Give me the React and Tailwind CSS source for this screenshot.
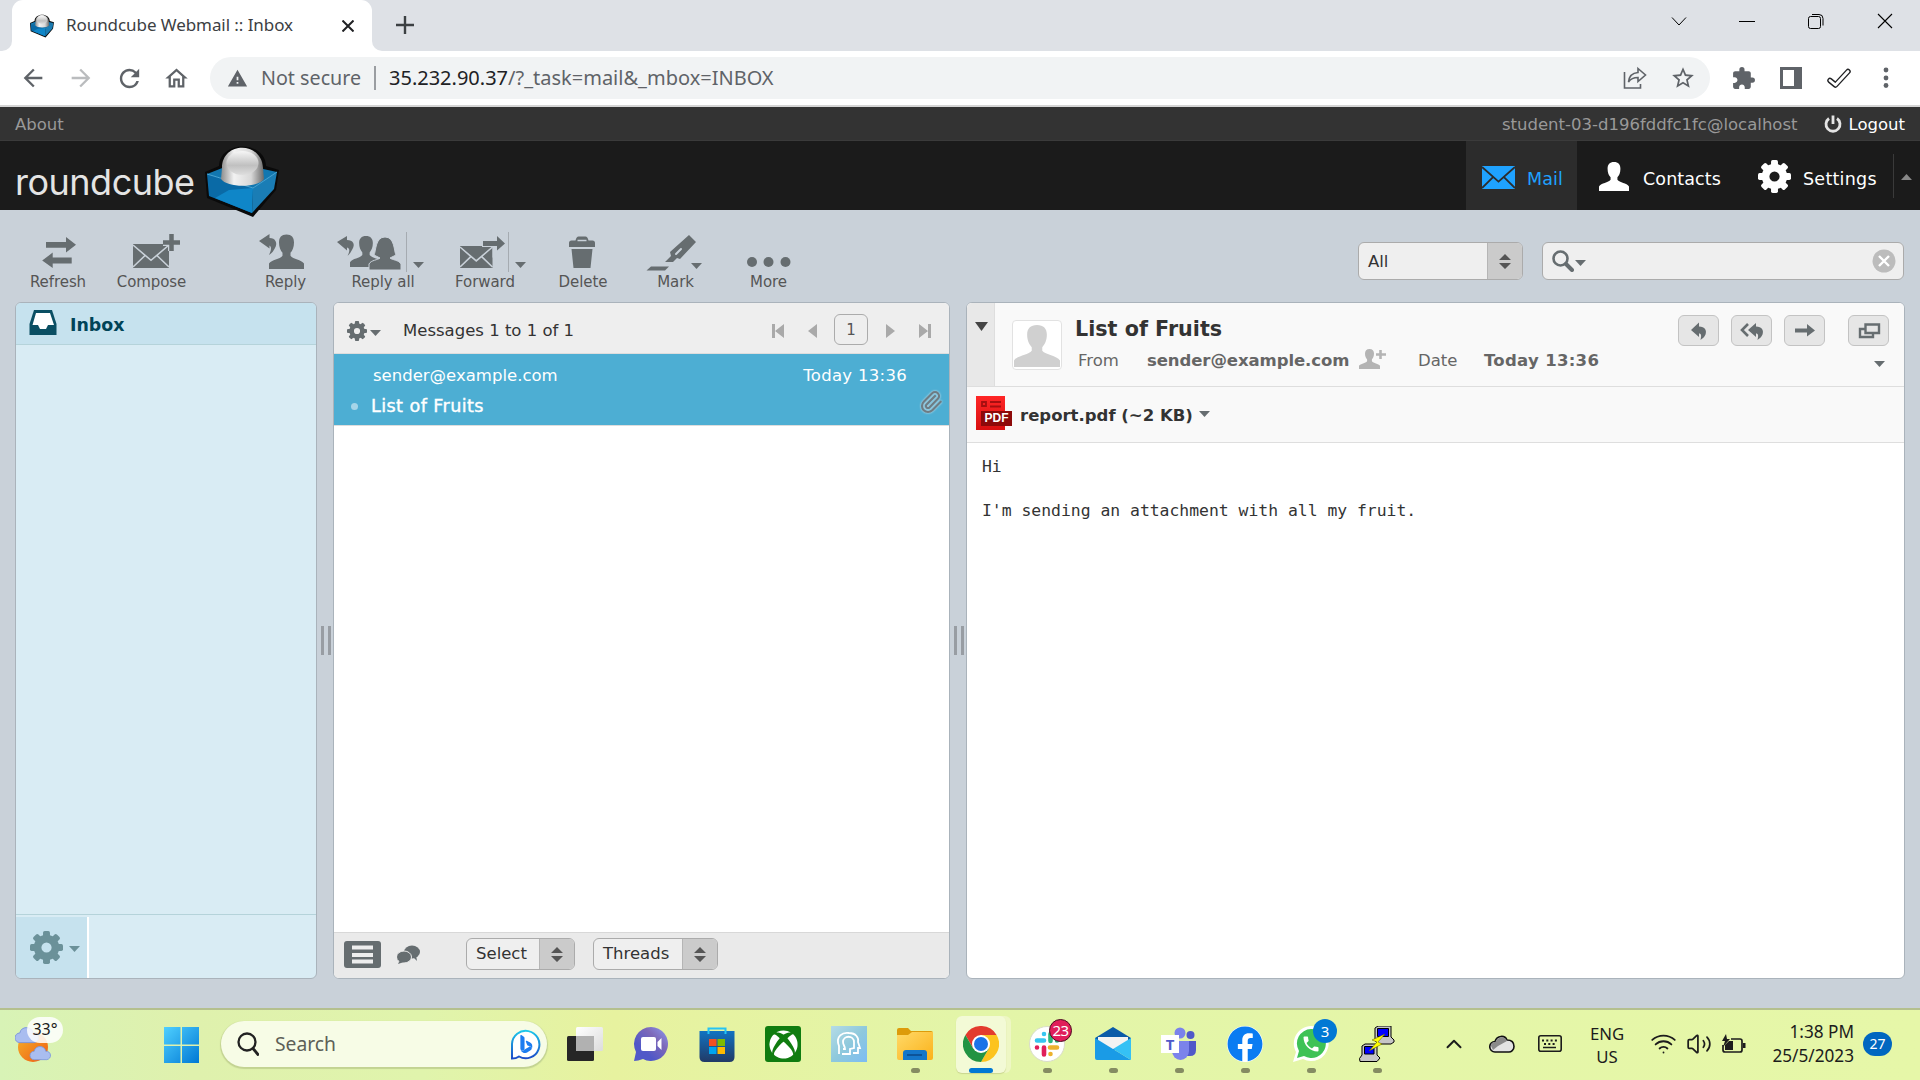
import React from "react";
import { MdArrowBack, MdArrowForward, MdRefresh, MdOutlineHome, MdWarning, MdStarBorder, MdExtension, MdPhone } from "react-icons/md";
import { FaXbox, FaFacebook } from "react-icons/fa";
import { BsBing } from "react-icons/bs";
import { Wifi, Volume2, ChevronUp, Paperclip } from "lucide-react";

const G = "#666d70";

function Svg({ box, className = "", children }) {
  const [, , w, h] = box.split(" ");
  return (
    <svg viewBox={box} width={w} height={h} className={"block shrink-0 " + className}>
      {children}
    </svg>
  );
}

function T({ className = "", children }) {
  return <span className={"whitespace-nowrap " + className}>{children}</span>;
}

function Gear({ cx, cy, r, fill }) {
  const t = r * 0.42;
  return (
    <g>
      {[0, 45, 90, 135, 180, 225, 270, 315].map((a) => (
        <rect key={a} x={cx - t / 2} y={cy - r} width={t} height={r * 0.5} rx={r * 0.1} fill={fill} transform={`rotate(${a} ${cx} ${cy})`} />
      ))}
      <circle cx={cx} cy={cy} r={r * 0.54} fill="none" stroke={fill} strokeWidth={r * 0.46} />
    </g>
  );
}

function Envelope({ x, y, w, h, fill = G, line = "#c9d1d9", sw = 1.6 }) {
  return (
    <g>
      <rect x={x} y={y} width={w} height={h} fill={fill} />
      <path
        d={`M${x} ${y + 1}L${x + w / 2} ${y + h * 0.68}L${x + w} ${y + 1}M${x} ${y + h - 1}L${x + w * 0.35} ${y + h * 0.46}M${x + w} ${y + h - 1}L${x + w * 0.65} ${y + h * 0.46}`}
        fill="none" stroke={line} strokeWidth={sw}
      />
    </g>
  );
}

/* Person bust whose box is w wide and h tall */
function Person({ x, y, w, h, fill = G }) {
  return (
    <g transform={`translate(${x} ${y}) scale(${w / 35} ${h / 35})`} fill={fill}>
      <path d="M17.500 0c5 0 7.500 3 7.500 8 0 5-1.500 8-3.500 10.500v3c2.500 3.500 11 4 13.500 8V35H0v-5.500c2.500-4 11-4.500 13.500-8v-3C11.500 16 10 13 10 8c0-5 2.500-8 7.500-8z" />
    </g>
  );
}

function Caret({ fill = G, className = "", w = 11, h = 6 }) {
  return (
    <svg width={w} height={h} viewBox="0 0 10 6" preserveAspectRatio="none" className={"block shrink-0 " + className}>
      <path d="M0 0h10L5 6z" fill={fill} />
    </svg>
  );
}

function Cube({ className }) {
  return (
    <svg viewBox="0 0 74 71" className={className}>
      <defs>
        <linearGradient id="dome" x1="0" x2="1" y1="0" y2="0">
          <stop offset="0" stopColor="#8d8d8d" /><stop offset=".3" stopColor="#f2f2f2" /><stop offset=".7" stopColor="#d8d8d8" /><stop offset="1" stopColor="#6b6b6b" />
        </linearGradient>
        <linearGradient id="domeTop" x1="0" x2="0" y1="0" y2="1">
          <stop offset="0" stopColor="#f6f6f6" /><stop offset=".6" stopColor="#c0c0c0" /><stop offset="1" stopColor="#dedede" />
        </linearGradient>
      </defs>
      <path d="M0 26L14 20C15-6 60-6 61 20L74 24 71 44 48 71 2 52z" fill="#0a0a0a" />
      <path d="M2 28L30 17 72 26 48 42z" fill="#1277b0" />
      <path d="M2 28L48 42 47 67 4 50z" fill="#0a6aa6" />
      <path d="M24 44L48 42 47 67 10 52z" fill="#0f86c8" />
      <path d="M48 42L72 26 69 43 47 67z" fill="#1a7db5" />
      <path d="M2 28L48 42 72 26" fill="none" stroke="#4aa8d8" strokeWidth="1" />
      <path d="M17 22C17-5 57-5 58 22l1 11c-6 9-37 9-43 0z" fill="url(#dome)" />
      <ellipse cx="37.500" cy="17" rx="16" ry="12" fill="url(#domeTop)" />
    </svg>
  );
}

function ChromeTabs() {
  return (
    <div className="h-[51px] bg-[#dee1e6] flex shrink-0">
      <div className="w-3 h-full bg-white shrink-0"><div className="w-3 h-full bg-[#dee1e6] rounded-br-[10px]" /></div>
      <div className="w-[360px] h-full bg-white rounded-t-[11px] flex items-center pl-[18px] shrink-0 text-[#3c4043]">
        <Cube className="w-6 h-[24px] shrink-0" />
        <div className="w-[288px] shrink-0 pl-3 pb-px text-[17px] tracking-[-0.070px] font-['Noto_Sans',sans-serif]"><T>Roundcube Webmail :: Inbox</T></div>
        <Svg box="0 0 12 12"><path d="M.500.500l11 11M11.500.500l-11 11" stroke="#202124" strokeWidth="2" /></Svg>
      </div>
      <div className="w-3 h-full bg-white shrink-0"><div className="w-3 h-full bg-[#dee1e6] rounded-bl-[10px]" /></div>
      <div className="pl-3 pt-[16px]"><Svg box="0 0 18 18"><path d="M9 0v18M0 9h18" stroke="#3c4043" strokeWidth="2.400" /></Svg></div>
      <div className="ml-auto pr-[27px] pt-[13px] flex">
        <Svg box="0 0 16 16" className="mr-[52px]"><path d="M1 4.500l7 7.500 7-7.500" fill="none" stroke="#000" /></Svg>
        <Svg box="0 0 16 16" className="mr-[53px]"><path d="M0 8.500h16" stroke="#000" /></Svg>
        <Svg box="0 0 16 16" className="mr-[53px]"><rect x=".5" y="3.500" width="12" height="12" rx="2" fill="none" stroke="#000" /><path d="M4 1.500h7a4 4 0 0 1 4 4v7" fill="none" stroke="#000" /></Svg>
        <Svg box="0 0 16 16"><path d="M1 1l14 14M15 1L1 15" stroke="#000" strokeWidth="1.100" /></Svg>
      </div>
    </div>
  );
}

function AddressBar() {
  return (
    <div className="h-[56px] border-b-2 border-[#d5d5d5] bg-white flex items-center shrink-0 pl-[19px] text-[#5f6368]">
      <MdArrowBack size={28} className="shrink-0" />
      <MdArrowForward size={28} className="ml-5 shrink-0 text-[#babcbe]" />
      <MdRefresh size={29} className="ml-5 shrink-0" />
      <MdOutlineHome size={27} className="ml-[19px] shrink-0" />
      <div className="ml-5 w-[1500px] h-[42px] rounded-full bg-[#f1f3f4] flex items-center shrink-0 pl-[17px] text-[20px] font-['Noto_Sans',sans-serif]">
        <MdWarning size={21} className="shrink-0" />
        <div className="w-[126px] shrink-0 pl-[13px] text-[19.700px]"><T>Not secure</T></div>
        <div className="w-0.5 h-6 bg-[#9a9da1] shrink-0" />
        <div className="w-[1241px] shrink-0 pl-[13px]"><T><span className="text-[#202124]">35.232.90.37</span>/?_task=mail&amp;_mbox=INBOX</T></div>
        <Svg box="0 0 24 24" className="ml-[6px]"><path d="M1.500 6v16h16v-4" fill="none" stroke="#5f6368" strokeWidth="1.600" /><path d="M15 2.500l7.500 6.500-7.500 6.500v-4c-5 0-7.500 1.500-9.500 4.500.5-5.500 3.500-9 9.500-9.500z" fill="none" stroke="#5f6368" strokeWidth="1.600" /></Svg>
        <MdStarBorder size={26} className="ml-[23px] shrink-0" />
      </div>
      <MdExtension size={25} className="ml-[21px] shrink-0" />
      <Svg box="0 0 22 22" className="ml-[24px]"><path d="M0 0h22v22H0zM3 3v16h11V3z" fill="#5f6368" fillRule="evenodd" /></Svg>
      <Svg box="0 0 24 20" className="ml-[25px]"><path d="M3 12.500L8.500 17 21 3.500" fill="none" stroke="#202124" strokeWidth="5.500" strokeLinecap="round" strokeLinejoin="round" /><path d="M3 12.500L8.500 17 21 3.500" fill="none" stroke="#fff" strokeWidth="2.800" strokeLinecap="round" strokeLinejoin="round" /></Svg>
      <Svg box="0 0 6 22" className="ml-[32px]"><g fill="#5f6368"><circle cx="3" cy="3" r="2.400" /><circle cx="3" cy="11" r="2.400" /><circle cx="3" cy="18.500" r="2.400" /></g></Svg>
    </div>
  );
}

function Header() {
  return (
    <>
      <div className="h-[34px] bg-[#333] border-b border-[#3b3b3b] flex items-center shrink-0 pl-[15px] pr-[15px] pt-[3px] text-[16.500px] text-[#999]">
        <T>About</T>
        <div className="ml-auto flex items-center">
          <T>student-03-d196fddfc1fc@localhost</T>
          <Svg box="0 0 18 18" className="ml-[26px] mr-[7px] mb-[3px]"><path d="M5 3.500a7 7 0 1 0 8 0M9 .5V9" fill="none" stroke="#e4e4e4" strokeWidth="2.800" /></Svg>
          <T className="text-white">Logout</T>
        </div>
      </div>
      <div className="h-[69px] bg-[#1b1b1b] flex shrink-0 pl-[15px] text-[17.500px] tracking-[0.100px]">
        <div className="w-[190px] pt-[17px] text-[36px] leading-[48px] tracking-[-0.500px] font-normal text-[#e4e4e4] font-['Inter',sans-serif]"><T>roundcube</T></div>
        <Cube className="w-[74px] h-[71px] mt-[5px] shrink-0 relative" />
        <div className="ml-auto flex text-white">
          <div className="w-[111px] bg-[#2c2c2c] flex items-center pl-4 text-[#1fa2ff]">
            <Svg box="0 0 33 23" className="mt-1"><Envelope x={0} y={0} w={33} h={23} fill="#1fa2ff" line="#2c2c2c" sw={1.8} /></Svg>
            <div className="pl-[12px] pt-2"><T>Mail</T></div>
          </div>
          <div className="w-[165px] flex items-center pl-[22px]">
            <Svg box="0 0 30 29" className="mt-0.5"><Person x={0} y={0} w={30} h={29} fill="#fff" /></Svg>
            <div className="pl-[14px] pt-2"><T>Contacts</T></div>
          </div>
          <div className="w-[151px] flex items-center pl-4">
            <Svg box="0 0 33 33" className="mt-0.5"><Gear cx={16.5} cy={16.5} r={16.5} fill="#fff" /></Svg>
            <div className="pl-[12px] pt-2 tracking-[0.250px]"><T>Settings</T></div>
          </div>
          <div className="w-[27px] flex items-center">
            <div className="w-px h-11 bg-[#3a3a3a]" />
            <svg width="11" height="6" viewBox="0 0 11 6" className="ml-[7px] mt-[3px]"><path d="M5.500 0L11 6H0z" fill="#888" /></svg>
          </div>
        </div>
      </div>
    </>
  );
}

function Tool({ w, x, label, className = "", children }) {
  return (
    <div className={"flex flex-col items-center shrink-0 pt-5 " + className}>
      <Svg box={`${x} 230 ${w} 42`}>{children}</Svg>
      <T className="leading-5 text-[15px] tracking-[-0.080px] text-[#555]">{label}</T>
    </div>
  );
}

function Stepper() {
  return (
    <div className="bg-[#cbcbcb] border-l border-[#b5b5b5] flex items-center justify-center h-full w-[35px] pr-px shrink-0">
      <Svg box="0 0 12 15"><path d="M0 6L6 0l6 6zM0 9h12l-6 6z" fill="#555" /></Svg>
    </div>
  );
}

function Toolbar() {
  return (
    <div className="h-[92px] flex shrink-0 pl-4">
      <Tool w={84} x={16} label="Refresh">
        <path fill={G} d="M46 242h20v-5l10 7.700-10 7.700v-4.600h-20zM71.700 257.600h-19v-5l-10.500 8 10.500 7.500v-4.600h19z" />
      </Tool>
      <Tool w={103} x={100} label="Compose">
        <Envelope x={133} y={244} w={36} h={24} />
        <path d="M171.500 234v17M163 242.500h17" stroke="#c9d1d9" strokeWidth="7" />
        <path d="M171.500 234v17M163 242.500h17" stroke={G} strokeWidth="4.500" />
      </Tool>
      <Tool w={81} x={245} label="Reply" className="ml-[42px]">
        <path fill={G} d="M259 241l10.500-7v4c6 0 8.500 5 5.500 10-1.500 3-3 5-6 7 2-4 3-8 .5-9.500v3z" />
        <Person x={269} y={234.500} w={35} h={34.500} />
      </Tool>
      <Tool w={114} x={326} label="Reply all">
        <path fill={G} d="M337 242l10-6v4c6 0 8.500 4 5.500 9-1.500 3-3 5-5 7 2-4 3-7.500-.5-8.500v3z" />
        <Person x={350} y={236} w={32} h={31} />
        <path d="M369 270v-6c2-4 9-4 11-6l-6-3c2-3 1-18 11-18s9 15 11 18l-6 3c2 2 9 2 11 6v6z" fill={G} stroke="#c9d1d9" strokeWidth="1" />
        <path d="M406.500 232v40" stroke="#a5abb1" />
        <path d="M413 262h11l-5.500 6z" fill={G} />
      </Tool>
      <Tool w={90} x={440} label="Forward">
        <Envelope x={460} y={246} w={32.500} h={22} />
        <path d="M482 243.500h15M496 237l9 6.500-9 7z" stroke="#c9d1d9" strokeWidth="7" />
        <path fill={G} d="M483 241h14v-5l8 7.500-8 7v-4.500h-14z" />
        <path d="M508.500 232v40" stroke="#a5abb1" />
        <path d="M515 262h11l-5.500 6z" fill={G} />
      </Tool>
      <Tool w={106} x={530} label="Delete">
        <path fill={G} d="M569 247v-4q0-2.500 2.500-2.500h4q1-4 3-4h7q2 0 3 4h4q2.500 0 2.500 2.500v4zM571.500 249h21l-2 19h-17z" />
        <path d="M577.500 240.500h9" stroke="#c9d1d9" strokeWidth="1.500" />
      </Tool>
      <Tool w={79} x={636} label="Mark">
        <path fill={G} d="M689 235l7 7-16 17-3-1-4 4h-8l6-6-1-4zM651 266.500h18l-4 4h-18.500z" />
        <path d="M676 254l5-5" stroke="#c9d1d9" strokeWidth="2" strokeLinecap="round" />
        <path d="M691 263h11l-5.500 6z" fill={G} />
      </Tool>
      <Tool w={107} x={715} label="More">
        <g fill={G}><circle cx="752" cy="262" r="5" /><circle cx="768.500" cy="262" r="5" /><circle cx="785.500" cy="262" r="5" /></g>
      </Tool>
      <div className="ml-auto mr-4 mt-8 h-[38px] flex text-[16.500px] text-[#333]">
        <div className="w-[165px] h-full rounded-md border border-[#ababab] bg-[#efefef] flex items-center overflow-hidden mr-[19px]">
          <div className="w-[128px] shrink-0 pl-[9px] pt-0.5"><T>All</T></div>
          <Stepper />
        </div>
        <div className="w-[362px] h-full rounded-md border border-[#ababab] bg-[#efefef] flex items-center pl-[9px] pr-[7px]">
          <Svg box="0 0 22 22"><circle cx="8.500" cy="8.500" r="7" fill="none" stroke={G} strokeWidth="2.600" /><path d="M14 14l6 6" stroke={G} strokeWidth="4" strokeLinecap="round" /></Svg>
          <Caret className="ml-px mt-1" />
          <Svg box="0 0 24 24" className="ml-auto"><circle cx="12" cy="12" r="11.500" fill="#bcbcbc" /><path d="M7 7l10 10M17 7L7 17" stroke="#fff" strokeWidth="2.400" /></Svg>
        </div>
      </div>
    </div>
  );
}

function Splitter() {
  return <div className="w-4 flex justify-center items-center gap-1 shrink-0 pl-0.5"><div className="w-[3px] h-[29px] bg-[#989da3]" /><div className="w-[3px] h-[29px] bg-[#989da3]" /></div>;
}

const panel = "h-full rounded-md border border-[#aab3bb] overflow-hidden flex flex-col shrink-0 ";

function Folders() {
  return (
    <div className={panel + "w-[302px] bg-[#d9ecf4]"}>
      <div className="h-[42px] bg-[#c6e2ee] border-b border-[#b5d3da] flex shrink-0 pl-[13px] pt-[7px]">
        <Svg box="0 0 28 25"><path d="M5 0h18l4.500 14v11H.500V14z" fill="#0b4f63" /><path d="M7 3h14l4 12h-6l-2 4h-6l-2-4H3.500z" fill="#fff" /></Svg>
        <div className="pl-[13px] pt-[3px] text-[17.400px] leading-6 font-bold text-[#004458]"><T>Inbox</T></div>
      </div>
      <div className="grow" />
      <div className="h-[64px] border-t border-[#b5d3da] shrink-0 flex pt-0.5">
        <div className="w-[73px] h-full bg-[#c6e2ee] border-r-2 border-white flex items-center pl-[14px] pb-px">
          <Svg box="0 0 33 33"><Gear cx={16.5} cy={16.5} r={16.5} fill="#6b9199" /></Svg>
          <Caret fill="#6b9199" className="ml-[6px] mt-1" />
        </div>
      </div>
    </div>
  );
}

function SelectBox({ label, cls, lcls }) {
  return (
    <div className={"h-8 rounded-md border border-[#ababab] bg-[#efefef] flex items-center overflow-hidden shrink-0 " + cls}>
      <div className={"pl-[9px] shrink-0 pt-px " + lcls}><T>{label}</T></div>
      <Stepper />
    </div>
  );
}

function MessageList() {
  return (
    <div className={panel + "w-[617px] bg-white text-[16.500px]"}>
      <div className="h-[51px] bg-[#eee] border-b border-[#ddd] flex items-center shrink-0 pl-[13px] text-[#333] pt-[5px]">
        <Svg box="0 0 20 20"><Gear cx={10} cy={10} r={10} fill={G} /></Svg>
        <Caret className="ml-[3px] mt-1" />
        <div className="w-[391px] pl-[22px] pt-0.5 shrink-0"><T>Messages 1 to 1 of 1</T></div>
        <Svg box="0 0 12 14"><path d="M0 0h3v14H0zM12 0v14L3 7z" fill="#a9a9a9" /></Svg>
        <Svg box="0 0 9 14" className="ml-6"><path d="M9 0v14L0 7z" fill="#a9a9a9" /></Svg>
        <div className="w-[34px] h-[31px] mt-[-3px] ml-[17px] pt-0.5 rounded-md border border-[#ababab] flex items-center justify-center shrink-0 text-[#555] text-[15px]">1</div>
        <Svg box="0 0 9 14" className="ml-[18px]"><path d="M0 0v14l9-7z" fill="#a9a9a9" /></Svg>
        <Svg box="0 0 12 14" className="ml-6"><path d="M9 0h3v14H9zM0 0v14l9-7z" fill="#a9a9a9" /></Svg>
      </div>
      <div className="h-[71px] bg-[#4daed3] text-white shrink-0 pl-4 flex flex-col">
        <div className="h-[38px] pt-[6px] flex items-center justify-between pl-[23px] pr-[42px]">
          <T>sender@example.com</T>
          <T className="tracking-[0.300px]">Today 13:36</T>
        </div>
        <div className="h-[28px] flex items-center">
          <div className="w-[7px] h-[7px] rounded-full bg-[#a5d5e8] ml-px" />
          <div className="pl-[13px] grow text-[17.600px] tracking-[0.420px]"><T className="[-webkit-text-stroke:0.400px_white]">List of Fruits</T></div>
          <Paperclip size={24} color="#6d7c84" strokeWidth={2.200} className="mr-[6px] mb-2 drop-shadow-[0_0_1px_#d5e6ee]" />
        </div>
      </div>
      <div className="grow border-t border-[#ddd]" />
      <div className="h-[46px] bg-[#eaeaea] border-t border-[#d8d8d8] shrink-0 flex items-center pl-[10px] pb-[3px] text-[#333]">
        <Svg box="0 0 37 27"><rect width="37" height="27" rx="3" fill={G} /><path d="M8 4.500h21v4H8zM8 12h21v4H8zM8 18.500h21v4H8z" fill="#eee" /></Svg>
        <Svg box="0 0 23 19" className="ml-4"><ellipse cx="15" cy="7" rx="8" ry="6.500" fill={G} /><path d="M15 11l5 5-1-6z" fill={G} /><ellipse cx="7" cy="12" rx="7.500" ry="6" fill={G} stroke="#eaeaea" /><path d="M3 15l-2 4 6-2z" fill={G} /></Svg>
        <SelectBox label="Select" cls="w-[109px] ml-[46px]" lcls="w-[72px]" />
        <SelectBox label="Threads" cls="w-[125px] ml-[18px]" lcls="w-[88px]" />
      </div>
    </div>
  );
}

function MiniButton({ className = "", children }) {
  return (
    <div className={"w-[41px] h-[31px] rounded-md border border-[#c3c3c3] bg-[#e6e6e6] flex items-center justify-center " + className}>
      <Svg box="0 0 24 18">{children}</Svg>
    </div>
  );
}

function Preview() {
  return (
    <div className={panel + "w-[939px] bg-white text-[16.500px]"}>
      <div className="h-[84px] bg-[#f9f9f9] border-b border-[#dedede] flex shrink-0">
        <div className="w-7 bg-[#e8e8e8] border-r border-[#dedede] flex justify-center pt-[19px] pl-px shrink-0"><Caret fill="#444" w={13} h={9} /></div>
        <div className="ml-[17px] mt-[17px] w-[50px] h-[50px] rounded border border-[#e2e2e2] bg-white flex items-end justify-center pb-0.5 shrink-0">
          <Svg box="0 0 46 42"><Person x={0} y={0} w={46} h={42} fill="#d0d0d0" /></Svg>
        </div>
        <div className="ml-[13px] pt-[10px] w-[600px] text-[#666] shrink-0">
          <div className="text-[20.700px] leading-8 font-bold text-[#333]"><T>List of Fruits</T></div>
          <div className="flex items-center h-8 pl-[3px]">
            <div className="w-[69px]"><T>From</T></div>
            <div className="w-[212px] font-bold tracking-[-0.080px] pt-px"><T>sender@example.com</T></div>
            <Svg box="0 0 27 21" className="mb-[5px]"><Person x={0} y={1} w={21} h={20} fill="#b4b4b4" /><path d="M21.500 2v9M17 6.500h10" stroke="#b4b4b4" strokeWidth="2.600" /></Svg>
            <div className="w-[66px] ml-8"><T>Date</T></div>
            <T className="font-bold tracking-[0.300px]">Today 13:36</T>
          </div>
        </div>
        <div className="ml-auto pr-[15px] pt-3 flex flex-col items-end">
          <div className="flex">
            <MiniButton><path fill={G} d="M4 8l8-7.500v4c6 0 8 4 6.500 8-1 2.500-3 4-5 5.500 1-4 1-6.500-1.500-6.500v3.500z" /></MiniButton>
            <MiniButton className="ml-3"><path fill={G} d="M8 8l8-7v3.500c6 0 8 4 6.500 8-1 2.500-3 4-5 5.500 1-4 1-6.500-1.500-6.500v3.500z" /><path d="M8 2L2 8l6 6" fill="none" stroke={G} strokeWidth="2.600" /></MiniButton>
            <MiniButton className="ml-3"><path fill={G} d="M2 6.500h12V2l8 6.500-8 6V10.500H2z" /></MiniButton>
            <MiniButton className="ml-[23px]"><path d="M8.500 2.500h13.500v8.500H8.500zM8 7H3v8h13v-4" fill="none" stroke={G} strokeWidth="2.400" /></MiniButton>
          </div>
          <Caret className="mt-[15px] mr-1" />
        </div>
      </div>
      <div className="h-[56px] bg-[#f9f9f9] border-b border-[#dedede] flex items-center shrink-0 pl-[9px] font-bold text-[#333]">
        <div className="w-[36px] h-[34px] relative mb-1 shrink-0">
          <div className="w-[29px] h-[34px] bg-gradient-to-b from-[#ff2626] to-[#d80f10]" />
          <Svg box="0 0 29 12" className="absolute left-0 top-1"><path d="M6 2h4v4H6zM14 2h11M14 6.500h11" fill="none" stroke="#a50f10" strokeWidth="1.800" /></Svg>
          <div className="absolute left-[5px] top-[15px] w-[31px] h-[15px] bg-[#8d0a0a] text-white text-[12px] leading-[15px] text-center font-bold font-['Liberation_Sans',sans-serif]">PDF</div>
        </div>
        <div className="w-[187px] shrink-0 pl-2 pt-[3px]"><T>report.pdf (~2 KB)</T></div>
        <Caret className="mb-px" />
      </div>
      <pre className="pl-[15px] pt-[13px] text-[16.400px] leading-[22px] text-[#333] font-['DejaVu_Sans_Mono',monospace]">{"Hi\n\nI'm sending an attachment with all my fruit."}</pre>
    </div>
  );
}

function TaskApp({ dot, active, children }) {
  return (
    <div className="w-[66px] h-[70px] flex justify-center shrink-0">
      <div className={"w-[50px] h-[57px] mt-[6px] rounded-md flex flex-col items-center pt-[10px] " + (active ? "bg-[#f3fad6] shadow-[0_1px_1px_#c9d68f,5px_0_0_#eef7c4]" : "")}>
        <div className="w-9 h-9 relative">{children}</div>
        {dot && <div className={"h-[5px] rounded-full mt-[6px] " + (active ? "w-6 bg-[#0078d4]" : "w-[9px] bg-[#858c62]")} />}
      </div>
    </div>
  );
}

function Cloud({ x, y, w }) {
  return (
    <g transform={`translate(${x} ${y}) scale(${w / 20})`}>
      <path d="M4 13a4 4 0 0 1 0-8C5-1 14-1 15 5a4 4 0 0 1 1 8z" fill="#a9bdf0" stroke="#7c97dc" strokeWidth=".8" />
    </g>
  );
}

function Taskbar() {
  return (
    <div className="h-[72px] border-t-2 border-[#b4c08e] shrink-0 flex bg-[linear-gradient(90deg,#d8f3b6_0%,#dff1ad_10%,#e0f4ac_22%,#e7f29f_32%,#e3f5a8_50%,#e6f7a8_100%)] font-['Noto_Sans',sans-serif] text-[#1c1c1c]">
      <div className="w-[164px] pl-[15px] pt-2 relative shrink-0">
        <Svg box="0 0 48 44">
          <defs><linearGradient id="sun" x1="0" y1="0" x2="1" y2="1"><stop offset="0" stopColor="#f5b32a" /><stop offset="1" stopColor="#ef5a12" /></linearGradient></defs>
          <circle cx="18" cy="29" r="15" fill="url(#sun)" /><Cloud x={0} y={9} w={24} /><Cloud x={15} y={28} w={21} />
        </Svg>
        <div className="absolute left-[27px] top-[7px] w-[36px] h-[26px] rounded-full bg-white/85 text-[16px] leading-6 text-center"><T>33°</T></div>
      </div>
      <Svg box="0 0 35 36" className="mt-[17px]">
        <defs><linearGradient id="win" x1="0" y1="0" x2="1" y2="1"><stop offset="0" stopColor="#4fd0ff" /><stop offset="1" stopColor="#0078d4" /></linearGradient></defs>
        <path d="M0 0h16.500v17.500H0zM18 0h17v17.500H18zM0 19h16.500v17H0zM18 19h17v17H18z" fill="url(#win)" />
      </Svg>
      <div className="ml-[22px] mt-[11px] w-[326px] h-[46px] rounded-full bg-[#f7fce6] shadow-[0_1px_1px_1px_#c3d392] flex items-center pl-4 pr-[6px] shrink-0">
        <Svg box="0 0 22 24"><circle cx="10" cy="10" r="8.500" fill="none" stroke="#222" strokeWidth="2.300" /><path d="M16 16.500l5 6" stroke="#222" strokeWidth="2.800" strokeLinecap="round" /></Svg>
        <div className="pl-4 text-[19.300px] text-[#5d6057] grow"><T>Search</T></div>
        <div className="w-[31px] h-[31px] relative flex items-center justify-center">
          <Svg box="0 0 31 31" className="absolute left-0 top-0"><defs><linearGradient id="bg" x1="0" y1="0" x2="0" y2="1"><stop offset="0" stopColor="#1cc7ea" /><stop offset="1" stopColor="#1b4cc9" /></linearGradient></defs><path d="M2 29.500V15A13.700 13.700 0 1 1 9 27.500q-3 2-7 2z" fill="#fff" stroke="url(#bg)" strokeWidth="2" /></Svg>
          <BsBing size={18} className="relative text-[#1b7cf0]" />
        </div>
      </div>
      <div className="ml-[5px] flex shrink-0">
        <TaskApp><Svg box="0 0 36 36"><defs><linearGradient id="wh" x1="0" y1="0" x2="1" y2="1"><stop offset="0" stopColor="#fff" /><stop offset="1" stopColor="#dcdcdc" /></linearGradient></defs><rect x="0" y="10" width="27" height="25" rx="1.500" fill="#262626" /><rect x="9" y="1" width="27" height="24" rx="1.500" fill="url(#wh)" /><path d="M9 10h18v15H9z" fill="#b1b1b1" /></Svg></TaskApp>
        <TaskApp><Svg box="0 0 36 36"><defs><linearGradient id="ch" x1="1" y1="0" x2="0" y2="1"><stop offset="0" stopColor="#8c9cf3" /><stop offset=".35" stopColor="#7d68b8" /><stop offset=".7" stopColor="#5058c8" /></linearGradient></defs><path d="M18 1a17 17 0 1 1-8 32Q5 35 1 35l2-9A17 17 0 0 1 18 1z" fill="url(#ch)" /><rect x="8" y="11" width="15" height="14" rx="2" fill="#fff" /><path d="M24.500 16l4-4v12l-4-4z" fill="#fff" /></Svg></TaskApp>
        <TaskApp><Svg box="0 0 36 36"><defs><linearGradient id="st" x1="0" y1="0" x2="0" y2="1"><stop offset="0" stopColor="#1173c2" /><stop offset="1" stopColor="#213a66" /></linearGradient></defs><path d="M.500 5h35v26q0 5-5 5H5.500q-5 0-5-5z" fill="url(#st)" /><path d="M9.500 8V2.500h17V8" fill="none" stroke="#25c4f4" strokeWidth="2" /><path d="M10 13h7.500v7H10z" fill="#f25022" /><path d="M18.500 13H26v7h-7.500z" fill="#7fba00" /><path d="M10 21h7.500v7H10z" fill="#00a4ef" /><path d="M18.500 21H26v7h-7.500z" fill="#ffb900" /></Svg></TaskApp>
        <TaskApp><div className="w-9 h-9 rounded-[3px] bg-[#107c10] flex items-center justify-center"><FaXbox size={29} color="#fff" /></div></TaskApp>
        <TaskApp><div className="w-9 h-9 bg-gradient-to-br from-[#b5dbe6] via-[#8fc9dc] to-[#7cbcf3]"><Svg box="0 0 36 36"><path d="M8 28V20C4 10 12 6 18 7c7 0 10 5 9 9l2 6h-2v5h-5M11 28h8v-5l4-1v-6c0-7-11-7-11 0 0 3 2 4 2 7h-2" fill="none" stroke="#fff" strokeWidth="1.800" /></Svg></div></TaskApp>
        <TaskApp dot><Svg box="0 0 36 36"><defs><linearGradient id="fo" x1="0" y1="0" x2="1" y2="1"><stop offset="0" stopColor="#ffd968" /><stop offset="1" stopColor="#fbb21a" /></linearGradient></defs><path d="M0 4q0-2 2-2h9l3 3h20q2 0 2 2v6H0z" fill="#dd9b0a" /><path d="M0 9h11l4-3h21v26q0 2-2 2H2q-2 0-2-2z" fill="url(#fo)" /><path d="M6 34v-7q0-3 3-3h18q3 0 3 3v7z" fill="#1576c9" /><path d="M10 29h15" stroke="#0c4b8c" strokeWidth="1.600" /></Svg></TaskApp>
        <TaskApp dot active><Svg box="0 0 36 36"><path d="M2.400 9A18 18 0 0 1 33.600 9H18l-7.800 13.500z" fill="#e33b2e" /><path d="M33.600 9A18 18 0 0 1 18 36l7.800-13.500L18 9z" fill="#fcc31e" /><path d="M18 36A18 18 0 0 1 2.400 9l7.800 13.500h15.600z" fill="#229342" /><circle cx="18" cy="18" r="9" fill="#fff" /><circle cx="18" cy="18" r="7" fill="#1a73e8" /></Svg></TaskApp>
        <TaskApp dot>
          <Svg box="0 0 36 36"><circle cx="18" cy="18" r="17.500" fill="#fff" stroke="#d9dcc9" /><g strokeWidth="4.600" strokeLinecap="round"><path d="M15 8v0M8 14.500h7" stroke="#36c5f0" /><path d="M21.500 8v7M28 14.500v0" stroke="#2eb67d" /><path d="M28 21.500h-7M21.500 28v0" stroke="#ecb22e" /><path d="M8 21.500v0M15 21.500v7" stroke="#e01e5a" /></g></Svg>
          <div className="absolute left-[20px] top-[-7px] w-[23px] h-[23px] rounded-full border-[1.500px] border-[#4a0d20] bg-[#e01e5a] text-white text-[15px] leading-5 text-center tracking-[-0.500px]">23</div>
        </TaskApp>
        <TaskApp dot><Svg box="0 0 36 36"><path d="M0 12L18 1l18 11v12H0z" fill="#0a5ba8" /><path d="M3 11h30v12H3z" fill="#f3f3f3" /><path d="M0 12l36 22H2q-2 0-2-2z" fill="#1a9be6" /><path d="M36 12L18 23l18 11z" fill="#35c1f5" /></Svg></TaskApp>
        <TaskApp dot>
          <Svg box="0 0 36 36"><circle cx="29.500" cy="9" r="4" fill="#5059c9" /><path d="M26 15h9v9q0 6-6 6h-3z" fill="#5059c9" /><circle cx="19" cy="7" r="5.500" fill="#7b83eb" /><path d="M11 15h17v10a8.500 9 0 0 1-17 0z" fill="#7b83eb" /><path d="M0 9h18v18H0z" fill="#fff" /></Svg>
          <div className="absolute left-0 top-[9px] w-[18px] h-[18px] leading-[18px] text-[15px] text-center font-bold text-[#5059c9]">T</div>
        </TaskApp>
        <TaskApp dot><div className="w-9 h-9 rounded-full bg-white"><FaFacebook size={36} color="#0a7cf2" /></div></TaskApp>
        <TaskApp dot>
          <Svg box="0 0 36 36"><path d="M18 0a17.500 17.500 0 1 1-8 33L0 36l3-10A17.500 17.500 0 0 1 18 0z" fill="#fff" /><path d="M18 3a14.500 14.500 0 1 1-7 27l-7 2 2-7A14.500 14.500 0 0 1 18 3z" fill="#3ec256" /></Svg>
          <MdPhone size={20} color="#fff" className="absolute left-2 top-2" />
          <div className="absolute left-[20px] top-[-7px] w-6 h-6 rounded-full bg-[#0078d4] text-white text-[15px] leading-6 text-center">3</div>
        </TaskApp>
        <TaskApp dot><Svg box="0 0 36 36">
          <g stroke="#000" strokeWidth="1"><path d="M16 2l3-2h13v11l3 3v2l-3 2H20l-4-3z" fill="#c6c6c6" /><path d="M18.500 2.500h11v8h-11z" fill="#00f" /><path d="M3 20l3-2h12v11l3 3-3 3.500H1l-.5-3L3 29z" fill="#c6c6c6" /><path d="M5.500 20.500H15v7.500H5.500z" fill="#00f" /></g>
          <path d="M26 8l-13 6 5 2-8 9 13-7-4-2z" fill="#ff0" stroke="#5a5a00" strokeWidth=".5" />
        </Svg></TaskApp>
      </div>
      <div className="ml-auto flex items-center pr-[28px] pb-[3px]">
        <ChevronUp size={26} strokeWidth={1.800} className="mr-[22px]" />
        <Svg box="0 0 26 18" className="mr-[23px]"><path d="M6 17a5 5 0 0 1 0-10.500C8 0 16 0 18 5c5 0 7 3 7 6.500S22 17 20 17z" fill="#e3e3e3" stroke="#111" strokeWidth="1.600" /><path d="M2 11c0-4 3-4 4.500-4C9 1 16 1 18 6l-9 5-5 4z" fill="#8a8a8a" /></Svg>
        <Svg box="0 0 24 17" className="mr-[28px]"><rect x=".8" y=".8" width="22.400" height="15.400" rx="2" fill="none" stroke="#1c1c1c" strokeWidth="1.600" /><path d="M4 5.500h16M6 9h12" stroke="#1c1c1c" strokeWidth="1.900" strokeDasharray="2 2.300" /><path d="M5 12.500h13" stroke="#1c1c1c" strokeWidth="1.500" /></Svg>
        <div className="w-[34px] pt-0.5 text-[16.800px] leading-[23px] text-center"><div><T>ENG</T></div><div><T>US</T></div></div>
        <Wifi size={27} strokeWidth={1.600} className="ml-[26px]" />
        <Volume2 size={26} strokeWidth={1.600} className="ml-[9px]" />
        <Svg box="0 0 25 20" className="ml-[9px]"><path d="M10 5h9q2 0 2 2v9q0 2-2 2H4q-2 0-2-2v-5" fill="none" stroke="#1c1c1c" strokeWidth="1.700" /><path d="M22 9h2.500v5H22zM4 16V11l4-4h4v9zM5 0L1 7h3l-2 6 7-8H6z" fill="#1c1c1c" /></Svg>
        <div className="w-[108px] text-right pt-px text-[17.200px] leading-[24px]"><div><T>1:38 PM</T></div><div><T>25/5/2023</T></div></div>
        <div className="w-[29px] h-6 rounded-full bg-[#0067c0] text-white text-[14px] leading-6 text-center ml-[9px]">27</div>
      </div>
    </div>
  );
}

export default function App() {
  return (
    <div className="w-[1920px] h-[1080px] bg-[#c9d1d9] flex flex-col overflow-hidden font-['DejaVu_Sans',Verdana,sans-serif]">
      <ChromeTabs />
      <AddressBar />
      <Header />
      <Toolbar />
      <div className="h-[677px] flex pl-[15px] shrink-0">
        <Folders />
        <Splitter />
        <MessageList />
        <Splitter />
        <Preview />
      </div>
      <div className="grow" />
      <Taskbar />
    </div>
  );
}
